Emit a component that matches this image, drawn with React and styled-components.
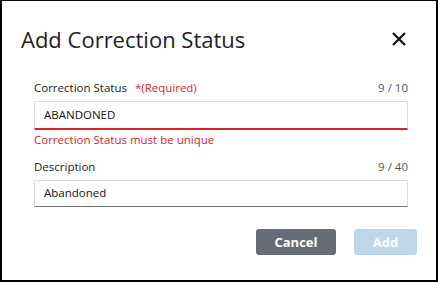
import styled, { createGlobalStyle } from 'styled-components';

const Global = createGlobalStyle`
    html, body {
        margin: 0;
        padding: 0;
        background: #fff;
    }
    * {
        box-sizing: border-box;
    }
`

const Dialog = styled.div`
    width: 438px;
    height: 282px;
    border: 2px solid #000;
    border-top-width: 1px;
    background: #fff;
    padding: 0 19px;
    font-family: 'Open Sans', 'Liberation Sans', sans-serif;
    color: #333;
`
const Header = styled.div`
    display: flex;
    justify-content: space-between;
    align-items: center;
    padding: 22px 10px 0 0;
    height: 53px;
`
const Title = styled.h2`
    margin: 0;
    font-size: 22px;
    line-height: 30px;
    font-weight: 400;
    color: #222;
`
const Close = styled.button`
    display: flex;
    border: none;
    background: none;
    padding: 0;
    cursor: pointer;
`
const Body = styled.div`
    padding: 0 9px 0 13px;
`
const Field = styled.div`
    display: flex;
    flex-direction: column;
    margin-top: ${p => p.$top}px;
`
const LabelRow = styled.div`
    display: flex;
    justify-content: space-between;
    font-size: 11.5px;
    line-height: 16px;
    height: 16px;
    margin-bottom: 5px;
`
const Label = styled.label`
    color: #222;
`
const Required = styled.span`
    color: #d8232a;
    margin-left: 5px;
`
const Counter = styled.span`
    color: #555;
`
const Input = styled.input`
    width: 100%;
    height: ${p => p.$error ? 29 : 27}px;
    border: 1px solid #dcdcdc;
    border-bottom: ${p => p.$error ? '2px solid #d8232a' : '1px solid #777'};
    border-radius: 2px 2px 0 0;
    padding: 0 9px 2px;
    font-family: inherit;
    font-size: 11.5px;
    color: #111;
    outline: none;
    background: #fff;
`
const Error = styled.div`
    font-size: 11.5px;
    line-height: 16px;
    margin-top: 2px;
    color: #d8232a;
`
const Footer = styled.div`
    display: flex;
    justify-content: flex-end;
    gap: 18px;
    margin-top: 22px;
`
const Button = styled.button`
    height: 26px;
    width: ${p => p.$w}px;
    border: none;
    border-radius: 3px;
    font-family: inherit;
    font-size: 13px;
    font-weight: 700;
    color: #fff;
    background: ${p => p.$primary ? '#bcd7ea' : '#676b77'};
    cursor: pointer;
`

const App = () => {
    return (
        <>
        <Global />
        <Dialog>
            <Header>
                <Title>Add Correction Status</Title>
                <Close aria-label="Close">
                    <svg width="16" height="16" viewBox="0 0 16 16">
                        <path d="M2 2 L14 14 M14 2 L2 14" stroke="#111" strokeWidth="2.2" />
                    </svg>
                </Close>
            </Header>
            <Body>
                <Field $top={26}>
                    <LabelRow>
                        <Label>Correction Status <Required>*(Required)</Required></Label>
                        <Counter>9 / 10</Counter>
                    </LabelRow>
                    <Input $error defaultValue="ABANDONED" />
                    <Error>Correction Status must be unique</Error>
                </Field>
                <Field $top={11}>
                    <LabelRow>
                        <Label>Description</Label>
                        <Counter>9 / 40</Counter>
                    </LabelRow>
                    <Input defaultValue="Abandoned" />
                </Field>
            </Body>
            <Footer>
                <Button $w={80}>Cancel</Button>
                <Button $w={63} $primary>Add</Button>
            </Footer>
        </Dialog>
        </>
    );
}

export default App;
